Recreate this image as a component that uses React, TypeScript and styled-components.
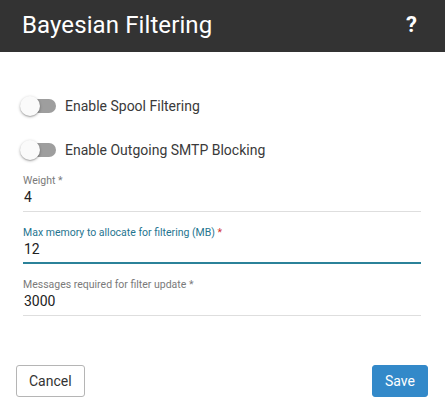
import styled, { createGlobalStyle } from 'styled-components'

const GlobalStyle = createGlobalStyle`
  html, body {
    margin: 0;
    padding: 0;
    background: #ffffff;
    font-family: Roboto, "Liberation Sans", Arial, sans-serif;
  }
  * {
    box-sizing: border-box;
  }
`

const Dialog = styled.div`
  width: 445px;
  height: 413px;
  display: flex;
  flex-direction: column;
  background: #ffffff;
`

const Header = styled.header`
  display: flex;
  align-items: center;
  justify-content: space-between;
  height: 52px;
  padding: 0 28px 2px 22px;
  background: #333333;
  color: #ffffff;
`

const Title = styled.h1`
  margin: 0;
  font-size: 24px;
  font-weight: 400;
  letter-spacing: 0.1px;
`

const HelpIcon = styled.span`
  font-size: 22px;
  font-weight: 700;
  line-height: 1;
`

const Body = styled.div`
  display: flex;
  flex-direction: column;
  padding: 42px 24px 0 23px;
`

const ToggleRow = styled.label`
  display: flex;
  align-items: center;
  height: 24px;
  margin-bottom: 20px;
  cursor: pointer;

  &:last-of-type {
    margin-bottom: 12px;
  }
`

const Switch = styled.span`
  position: relative;
  display: flex;
  align-items: center;
  width: 36px;
  height: 24px;
  margin-left: -3px;
  flex-shrink: 0;
`

const Track = styled.span<{ $on: boolean }>`
  width: 34px;
  height: 14px;
  margin-left: 2px;
  border-radius: 7px;
  background: ${({ $on }) => ($on ? '#7fb8cc' : '#9e9e9e')};
`

const Thumb = styled.span<{ $on: boolean }>`
  position: absolute;
  top: 2px;
  left: ${({ $on }) => ($on ? '16px' : '0')};
  width: 20px;
  height: 20px;
  border-radius: 50%;
  background: ${({ $on }) => ($on ? '#2b8299' : '#fafafa')};
  box-shadow: 0 1px 3px rgba(0, 0, 0, 0.3), 0 1px 1px rgba(0, 0, 0, 0.14);
`

const ToggleLabel = styled.span`
  margin-left: 9px;
  font-size: 14px;
  color: #3a3a3a;
`

const Field = styled.div<{ $focused?: boolean }>`
  display: flex;
  flex-direction: column;
  padding: 0 0 ${({ $focused }) => ($focused ? '4px' : '5px')} 0;
  border-bottom: ${({ $focused }) => ($focused ? '2px solid #2b8299' : '1px solid #dedede')};

  & + & {
    margin-top: 14px;
  }
`

const FieldLabel = styled.span<{ $focused?: boolean }>`
  font-size: 10.5px;
  line-height: 14px;
  color: ${({ $focused }) => ($focused ? '#1f7590' : '#7a7a7a')};
`

const Required = styled.span<{ $focused?: boolean }>`
  color: ${({ $focused }) => ($focused ? '#d32f2f' : '#7a7a7a')};
`

const FieldValue = styled.span`
  font-size: 14px;
  line-height: 18px;
  padding-left: 1px;
  color: #222222;
`

const Footer = styled.footer`
  display: flex;
  justify-content: space-between;
  padding: 49px 17px 0 16px;
`

const Button = styled.button<{ $primary?: boolean }>`
  height: 32px;
  padding: 0 12px;
  font-family: inherit;
  font-size: 14px;
  border-radius: 3px;
  cursor: pointer;
  border: 1px solid ${({ $primary }) => ($primary ? '#3389c9' : '#b5b5b5')};
  background: ${({ $primary }) => ($primary ? '#3389c9' : '#ffffff')};
  color: ${({ $primary }) => ($primary ? '#ffffff' : '#333333')};
`

const toggles = [
  { key: 'spool', label: 'Enable Spool Filtering', on: false },
  { key: 'smtp', label: 'Enable Outgoing SMTP Blocking', on: false },
]

const fields = [
  { key: 'weight', label: 'Weight', value: '4', focused: false },
  { key: 'memory', label: 'Max memory to allocate for filtering (MB)', value: '12', focused: true },
  { key: 'messages', label: 'Messages required for filter update', value: '3000', focused: false },
]

export default function App() {
  return (
    <>
      <GlobalStyle />
      <Dialog>
        <Header>
          <Title>Bayesian Filtering</Title>
          <HelpIcon>?</HelpIcon>
        </Header>

        <Body>
          {toggles.map((t) => (
            <ToggleRow key={t.key}>
              <Switch>
                <Track $on={t.on} />
                <Thumb $on={t.on} />
              </Switch>
              <ToggleLabel>{t.label}</ToggleLabel>
            </ToggleRow>
          ))}

          {fields.map((f) => (
            <Field key={f.key} $focused={f.focused}>
              <FieldLabel $focused={f.focused}>
                {f.label} <Required $focused={f.focused}>*</Required>
              </FieldLabel>
              <FieldValue>{f.value}</FieldValue>
            </Field>
          ))}
        </Body>

        <Footer>
          <Button>Cancel</Button>
          <Button $primary>Save</Button>
        </Footer>
      </Dialog>
    </>
  )
}
